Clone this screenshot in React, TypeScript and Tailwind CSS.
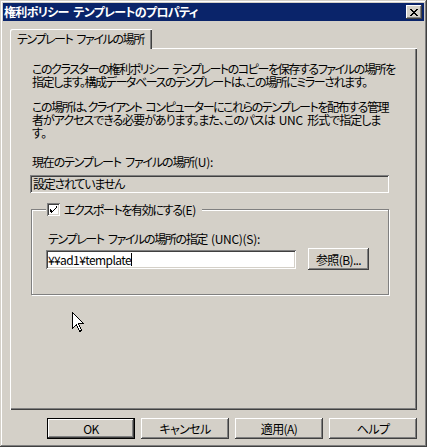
import { ReactNode } from "react";

const raised =
    "shadow-[inset_-1px_-1px_#404040,inset_1px_1px_#ffffff,inset_-2px_-2px_#808080]";
const sunken =
    "shadow-[inset_1px_1px_#808080,inset_-1px_-1px_#ffffff,inset_2px_2px_#404040,inset_-2px_-2px_#d4d0c8]";

// lines are squeezed a bit, then stretched to the widths measured in the dialog
const fit = "whitespace-nowrap tracking-[-1.4px] [text-align-last:justify]";

function Latin({ children }: { children: ReactNode }) {
    return <span className="tracking-[-0.3px]">{children}</span>;
}

// word gap that survives the negative tracking
function Sp() {
    return <span className="inline-block w-[4px]" />;
}

function Button({ children, isDefault }: { children: ReactNode; isDefault?: boolean }) {
    return (
        <div
            className={`flex items-center justify-center w-[88px] h-[21px] bg-[#d4d0c8] text-[12px] text-black tracking-[-0.6px] ${
                isDefault
                    ? "border border-black shadow-[inset_-1px_-1px_#404040,inset_1px_1px_#ffffff,inset_-2px_-2px_#808080]"
                    : raised
            }`}
        >
            {children}
        </div>
    );
}

function Cursor() {
    return (
        <svg
            className="absolute left-[72px] top-[312px]"
            width="13"
            height="21"
            viewBox="0 0 13 21"
        >
            <path
                d="M0.5 0.5 L0.5 16.5 L4.5 12.5 L7.5 19.5 L9.5 18.5 L6.5 11.5 L11.5 11.5 Z"
                fill="#ffffff"
                stroke="#000000"
                strokeWidth="1"
                shapeRendering="crispEdges"
            />
        </svg>
    );
}

export default function App() {
    return (
        <div className="relative w-[427px] h-[447px] bg-[#d4d0c8] p-[3px] font-['Noto_Sans_CJK_JP',sans-serif] [font-feature-settings:'palt'] text-black shadow-[inset_-1px_-1px_#404040,inset_1px_1px_#d4d0c8,inset_-2px_-2px_#808080,inset_2px_2px_#ffffff]">
            {/* title bar */}
            <div className="flex items-center justify-between h-[18px] bg-[#0a246a] pl-[1px] pr-[2px]">
                <span className={`inline-block w-[193px] text-white font-bold text-[12px] leading-none ${fit}`}>
                    権利ポリシー<Sp />テンプレートのプロパティ
                </span>
                <div className={`flex items-center justify-center w-[16px] h-[14px] bg-[#d4d0c8] ${raised}`}>
                    <svg width="8" height="7" viewBox="0 0 8 7">
                        <path
                            d="M0 0h2v1h1v1h2V1h1V0h2v1H7v1H6v1H5v1h1v1h1v1h1v1H6V6H5V5H3v1H2v1H0V6h1V5h1V4h1V3H2V2H1V1H0z"
                            fill="#000"
                            shapeRendering="crispEdges"
                        />
                    </svg>
                </div>
            </div>

            {/* tab strip */}
            <div className="mt-[8px] ml-[7px] mr-[7px]">
                <div className="flex">
                    <div className="relative z-10 w-[142px] h-[20px] -mb-[1px] bg-[#d4d0c8] pl-[7px] pt-[3px] text-[12px] leading-[14px] rounded-tl-[2px] shadow-[inset_1px_1px_#ffffff,inset_-1px_0_#404040,inset_-2px_0_#808080]">
                        <div className={`w-[126px] ${fit}`}>テンプレート<Sp />ファイルの場所</div>
                    </div>
                </div>

                {/* tab panel */}
                <div className="h-[362px] pl-[22px] pr-[20px] pt-[14px] text-[12px] leading-[13px] shadow-[inset_1px_1px_#ffffff,inset_-1px_-1px_#404040,inset_-2px_-2px_#808080]">
                    <div>
                        <div className={`w-[356px] ${fit}`}>このクラスターの権利ポリシー<Sp />テンプレートのコピーを保存するファイルの場所を</div>
                        <div className={`w-[334px] ${fit}`}>指定します。構成データベースのテンプレートは、この場所にミラーされます。</div>
                    </div>
                    <div className="mt-[12px]">
                        <div className={`w-[351px] ${fit}`}>この場所は、クライアント<Sp />コンピューターにこれらのテンプレートを配布する管理</div>
                        <div className={`w-[348px] ${fit}`}>
                            者がアクセスできる必要があります。また、このパスは<Sp /><Latin>UNC</Latin><Sp />形式で指定しま
                        </div>
                        <div className="tracking-[-0.5px]">す。</div>
                    </div>

                    <div className={`mt-[16px] w-[181px] ${fit}`}>
                        現在のテンプレート<Sp />ファイルの場所<Latin>(U):</Latin>
                    </div>
                    <div className={`mt-[7px] h-[18px] w-[359px] -ml-[2px] bg-[#d4d0c8] pl-[3px] pt-[2px] ${sunken}`}>
                        <div className={`w-[91px] ${fit}`}>設定されていません</div>
                    </div>

                    {/* group box */}
                    <div className="relative mt-[16px] w-[358px] -ml-[1px] h-[86px] border border-[#808080] shadow-[1px_1px_#ffffff,inset_1px_1px_#ffffff]">
                        <div className="absolute -top-[7px] left-[14px] flex items-center gap-[4px] bg-[#d4d0c8] pl-[1px] pr-[6px]">
                            <div className={`flex items-center justify-center w-[13px] h-[13px] bg-white ${sunken}`}>
                                <svg width="7" height="7" viewBox="0 0 7 7">
                                    <path
                                        d="M6 0h1v2H6v1H5v1H4v1H3v1H2v1H1V6H0V3h1v1h1v1h1V4h1V3h1V2h1z"
                                        fill="#000"
                                        shapeRendering="crispEdges"
                                    />
                                </svg>
                            </div>
                            <span className={`inline-block w-[132px] ${fit}`}>
                                エクスポートを有効にする<Latin>(E)</Latin>
                            </span>
                        </div>

                        <div className="pl-[16px] pt-[22px]">
                            <div className={`w-[212px] ${fit}`}>
                                テンプレート<Sp />ファイルの場所の指定<Sp /><Latin>(UNC)(S):</Latin>
                            </div>
                        </div>
                        <div className="flex items-center pl-[14px] mt-[3px] gap-[12px]">
                            <div className={`flex items-center h-[19px] w-[250px] bg-white pl-[2px] ${sunken}`}>
                                <span className="whitespace-nowrap tracking-[-0.6px]">¥¥ad1¥template</span>
                                <span className="inline-block w-[1px] h-[13px] bg-black" />
                            </div>
                            <div className={`flex items-center justify-center w-[61px] h-[22px] tracking-[-0.6px] ${raised}`}>
                                参照(B)...
                            </div>
                        </div>
                    </div>
                </div>
            </div>

            {/* dialog buttons */}
            <div className="flex justify-end gap-[6px] mt-[8px] pr-[7px]">
                <Button isDefault>OK</Button>
                <Button>キャンセル</Button>
                <Button>適用(A)</Button>
                <Button>ヘルプ</Button>
            </div>

            <Cursor />
        </div>
    );
}
